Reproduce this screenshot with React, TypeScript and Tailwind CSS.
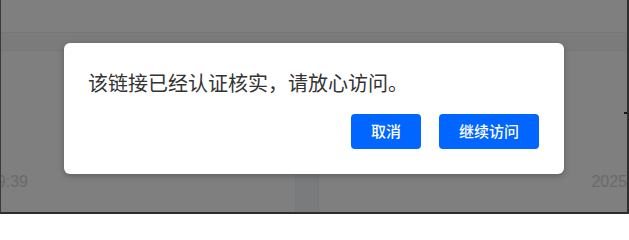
import React from "react";

export default function App() {
  return (
    <div
      className="relative w-[629px] h-[214px] overflow-hidden bg-white"
      style={{ fontFamily: '"Noto Sans CJK SC", "Noto Sans", sans-serif' }}
    >
      {/* underlying page */}
      <div className="flex h-full flex-col border-l-[1.5px] border-r-[2px] border-b-[2px] border-l-[#747474] border-r-[#5c5c5c] border-b-[#5a5a5a]">
        <div className="h-[32px] shrink-0" />
        <div className="h-[19px] shrink-0 border-y border-[#eceef1] bg-[#f6f7f9]" />
        <div className="relative flex flex-1">
          <div className="flex w-[300px] flex-col justify-end pb-[20px]">
            <div className="flex w-[27px] justify-end overflow-hidden">
              <span className="whitespace-nowrap text-[16px] leading-[20px] text-[#d4d4d4]" style={{ fontFamily: '"Liberation Sans", sans-serif' }}>
                2025-06-18 09:39
              </span>
            </div>
          </div>
          <div className="w-[25px] border-x border-[#eef0f3] bg-[#f4f6f9]" />
          <div className="flex flex-1 flex-col justify-end pb-[20px] pl-[272px]">
            <span className="whitespace-nowrap text-[16px] leading-[20px] text-[#d4d4d4]" style={{ fontFamily: '"Liberation Sans", sans-serif' }}>
              2025
            </span>
          </div>
          <div className="absolute right-0 top-[61px] h-[1.5px] w-[3px] bg-[#333]" />
        </div>
      </div>

      {/* overlay */}
      <div className="absolute inset-0 bg-black/50">
        <div className="absolute left-[64px] top-[43px] flex h-[131px] w-[500px] flex-col rounded-[6px] bg-white px-[24px] pt-[26px] shadow-[0_2px_6px_rgba(0,0,0,0.25)]">
          <p className="text-[20px] leading-[28px] text-[#333333]">
            该链接已经认证核实，请放心访问。
          </p>
          <div className="mt-[17px] flex justify-end gap-[18px] pr-[1px]">
            <button className="h-[35px] w-[70px] rounded-[4px] bg-[#0066ff] text-[15px] font-medium text-white">
              取消
            </button>
            <button className="h-[35px] w-[100px] rounded-[4px] bg-[#0066ff] text-[15px] font-medium text-white">
              继续访问
            </button>
          </div>
        </div>
      </div>
    </div>
  );
}
